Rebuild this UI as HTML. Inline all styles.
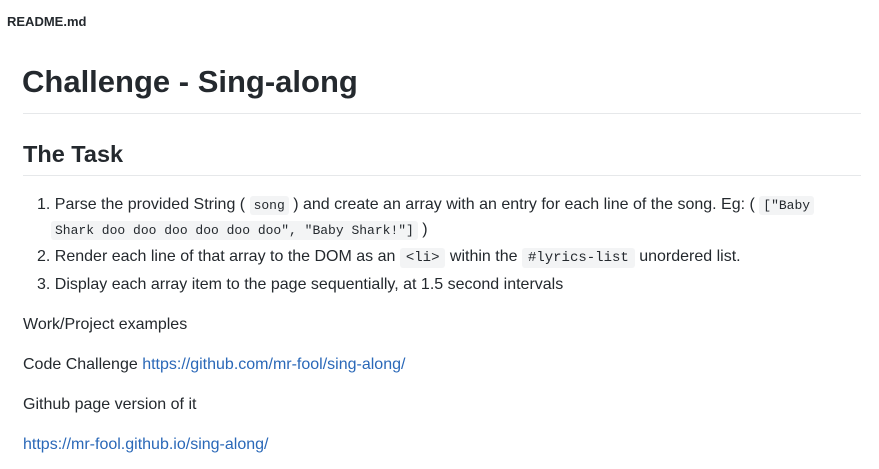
<!DOCTYPE html>
<html><head><style>
body{margin:0;width:879px;height:469px;background:#fff;font-family:"Liberation Sans",sans-serif;color:#24292e;position:relative;overflow:hidden}
.a{position:absolute;white-space:nowrap}
code{font-family:"Liberation Mono",monospace;font-size:13px;background:#f3f4f5;padding:2px 4px;border-radius:3px}
.t{font-size:16px}
.b code{font-size:14px;padding:2px 6px}
a{color:#2a68b8;text-decoration:none}
.hr{position:absolute;left:23px;width:838px;height:1px;background:#e6e8ea}
</style></head><body>
<div class="a" style="left:7px;top:14px;font-size:13px;font-weight:bold">README.md</div>
<div class="a" style="left:22px;top:64px;font-size:31px;font-weight:bold">Challenge - Sing-along</div>
<div class="hr" style="top:113px"></div>
<div class="a" style="left:23px;top:141px;font-size:23.5px;font-weight:bold">The Task</div>
<div class="hr" style="top:175px"></div>
<div class="a t" style="left:37px;top:196px">1. Parse the provided String ( <code>song</code> ) and create an array with an entry for each line of the song. Eg: ( <code>["Baby</code></div>
<div class="a t" style="left:51px;top:221px"><code>Shark doo doo doo doo doo doo", "Baby Shark!"]</code> )</div>
<div class="a t b" style="left:37px;top:248px">2. Render each line of that array to the DOM as an <code>&lt;li&gt;</code> within the <code>#lyrics-list</code> unordered list.</div>
<div class="a t" style="left:37px;top:276px">3. Display each array item to the page sequentially, at 1.5 second intervals</div>
<div class="a t" style="left:23px;top:316px">Work/Project examples</div>
<div class="a t" style="left:23px;top:356px">Code Challenge <a>https://github.com/mr-fool/sing-along/</a></div>
<div class="a t" style="left:23px;top:396px">Github page version of it</div>
<div class="a t" style="left:23px;top:436px"><a>https://mr-fool.github.io/sing-along/</a></div>
</body></html>
